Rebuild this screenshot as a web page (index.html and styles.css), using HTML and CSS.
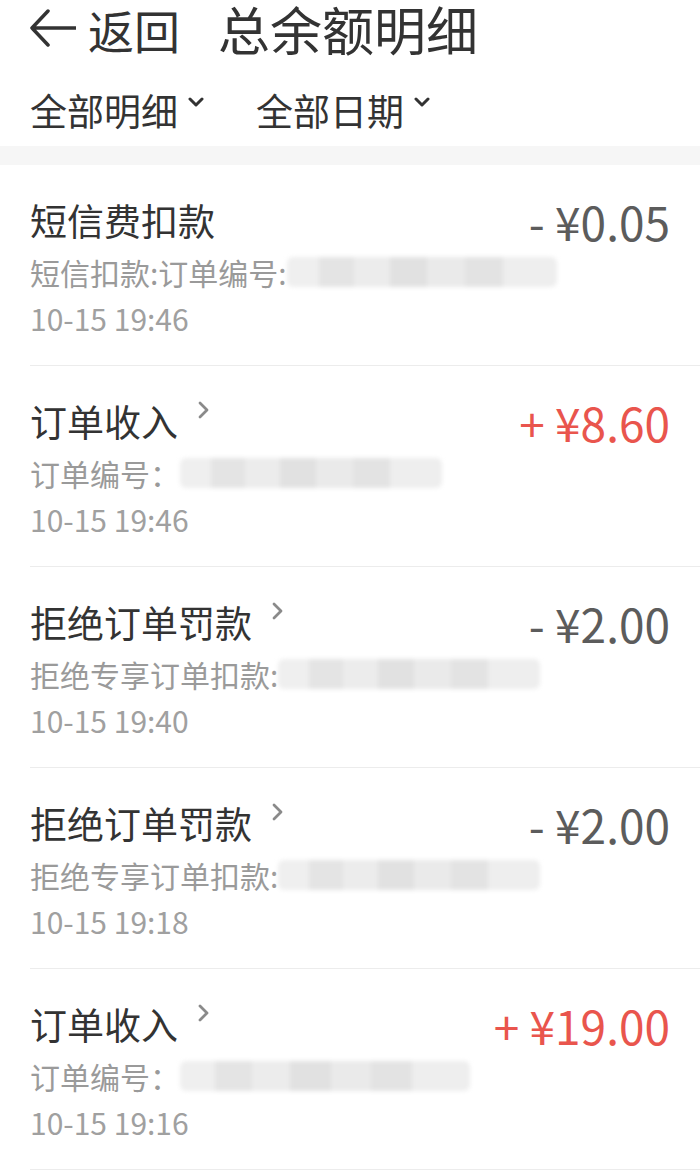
FILE: index.html
```html
<!DOCTYPE html>
<html lang="zh-CN">
<head>
  <meta charset="UTF-8" />
  <meta name="viewport" content="width=device-width, initial-scale=1" />
  <title>总余额明细</title>
  <link rel="stylesheet" href="styles.css">
</head>
<body>

<header class="topbar">
  <svg class="back-arrow" width="46" height="40" viewBox="0 0 46 40">
    <path d="M18 2 L2 19 L18 36 M2 19 H46" fill="none" stroke="#333" stroke-width="3.5" stroke-linecap="round" stroke-linejoin="round"/>
  </svg>
  <span class="back-text">返回</span>
  <h1 class="page-title">总余额明细</h1>
</header>

<div class="filters">
  <div class="filter">
    全部明细
    <svg class="caret" width="16" height="10" viewBox="0 0 16 10"><path d="M2 2 L8 8 L14 2" fill="none" stroke="#333" stroke-width="3" stroke-linecap="round" stroke-linejoin="round"/></svg>
  </div>
  <div class="filter">
    全部日期
    <svg class="caret" width="16" height="10" viewBox="0 0 16 10"><path d="M2 2 L8 8 L14 2" fill="none" stroke="#333" stroke-width="3" stroke-linecap="round" stroke-linejoin="round"/></svg>
  </div>
</div>

<div class="band"></div>

<ul class="records">
  <li class="record">
    <div class="record-main">
      <div class="record-title">短信费扣款</div>
      <div class="record-desc">短信扣款:订单编号:<span class="mask mask-long"></span></div>
      <div class="record-time">10-15 19:46</div>
    </div>
    <div class="record-amount">- ¥0.05</div>
  </li>
  <li class="record">
    <div class="record-main">
      <div class="record-title">订单收入<svg class="more" width="14" height="20" viewBox="0 0 14 20"><path d="M4 3 L11 10 L4 17" fill="none" stroke="#8a8a8a" stroke-width="2.8" stroke-linecap="round" stroke-linejoin="round"/></svg></div>
      <div class="record-desc">订单编号：<span class="mask"></span></div>
      <div class="record-time">10-15 19:46</div>
    </div>
    <div class="record-amount income">+ ¥8.60</div>
  </li>
  <li class="record">
    <div class="record-main">
      <div class="record-title">拒绝订单罚款<svg class="more" width="14" height="20" viewBox="0 0 14 20"><path d="M4 3 L11 10 L4 17" fill="none" stroke="#8a8a8a" stroke-width="2.8" stroke-linecap="round" stroke-linejoin="round"/></svg></div>
      <div class="record-desc">拒绝专享订单扣款:<span class="mask"></span></div>
      <div class="record-time">10-15 19:40</div>
    </div>
    <div class="record-amount">- ¥2.00</div>
  </li>
  <li class="record">
    <div class="record-main">
      <div class="record-title">拒绝订单罚款<svg class="more" width="14" height="20" viewBox="0 0 14 20"><path d="M4 3 L11 10 L4 17" fill="none" stroke="#8a8a8a" stroke-width="2.8" stroke-linecap="round" stroke-linejoin="round"/></svg></div>
      <div class="record-desc">拒绝专享订单扣款:<span class="mask"></span></div>
      <div class="record-time">10-15 19:18</div>
    </div>
    <div class="record-amount">- ¥2.00</div>
  </li>
  <li class="record">
    <div class="record-main">
      <div class="record-title">订单收入<svg class="more" width="14" height="20" viewBox="0 0 14 20"><path d="M4 3 L11 10 L4 17" fill="none" stroke="#8a8a8a" stroke-width="2.8" stroke-linecap="round" stroke-linejoin="round"/></svg></div>
      <div class="record-desc">订单编号：<span class="mask mask-wide"></span></div>
      <div class="record-time">10-15 19:16</div>
    </div>
    <div class="record-amount income">+ ¥19.00</div>
  </li>
</ul>

</body>
</html>
```

FILE: styles.css
```css
body {
  font-family: "Noto Sans CJK SC", "Noto Sans", sans-serif;
  background: #fff;
  color: #333;
  margin: 0;
  padding: 0;
}
.topbar {
  display: flex;
  align-items: center;
  height: 58px;
  padding-left: 30px;
}
.back-arrow {
  display: block;
  margin-right: 12px;
}
.back-text {
  font-size: 46px;
  line-height: 58px;
}
.page-title {
  margin: 0 0 0 38px;
  font-size: 52px;
  font-weight: 400;
  line-height: 58px;
}
.filters {
  display: flex;
  align-items: flex-start;
  height: 88px;
  box-sizing: border-box;
  padding: 30px 0 0 30px;
  gap: 52px;
}
.filter {
  display: flex;
  align-items: flex-start;
  font-size: 37px;
  line-height: 44px;
}
.caret {
  display: block;
  margin: 9px 0 0 10px;
}
.band {
  height: 19px;
  background: #f6f6f6;
}
.records {
  list-style: none;
  margin: 0 0 0 30px;
  padding: 0;
}
.record {
  display: flex;
  align-items: flex-start;
  height: 200px;
  padding-right: 30px;
  border-bottom: 1px solid #ececec;
}
.record-main {
  flex: 1;
  min-width: 0;
  padding-top: 33px;
}
.record-title {
  display: flex;
  align-items: flex-start;
  font-size: 37px;
  line-height: 44px;
  color: #333;
}
.more {
  display: block;
  margin: 1px 0 0 18px;
}
.record-desc {
  display: flex;
  align-items: center;
  margin-top: 6px;
  font-size: 30px;
  line-height: 48px;
  color: #9a9a9a;
  white-space: nowrap;
}
.record-time {
  font-size: 30px;
  line-height: 44px;
  color: #a0a0a0;
}
.mask {
  display: block;
  flex-shrink: 0;
  width: 262px;
  height: 30px;
  border-radius: 6px;
  background: linear-gradient(90deg, #efefef 0 12%, #e4e4e4 12% 25%, #ececec 25% 38%, #e1e1e1 38% 52%, #eaeaea 52% 66%, #e3e3e3 66% 80%, #eeeeee 80% 100%);
  filter: blur(2px);
}
.mask-long {
  width: 270px;
}
.mask-wide {
  width: 290px;
}
.record-amount {
  flex-shrink: 0;
  padding-top: 28px;
  font-size: 46px;
  line-height: 56px;
  color: #5c5c5c;
  white-space: nowrap;
}
.record-amount.income {
  color: #e9554d;
}
```
